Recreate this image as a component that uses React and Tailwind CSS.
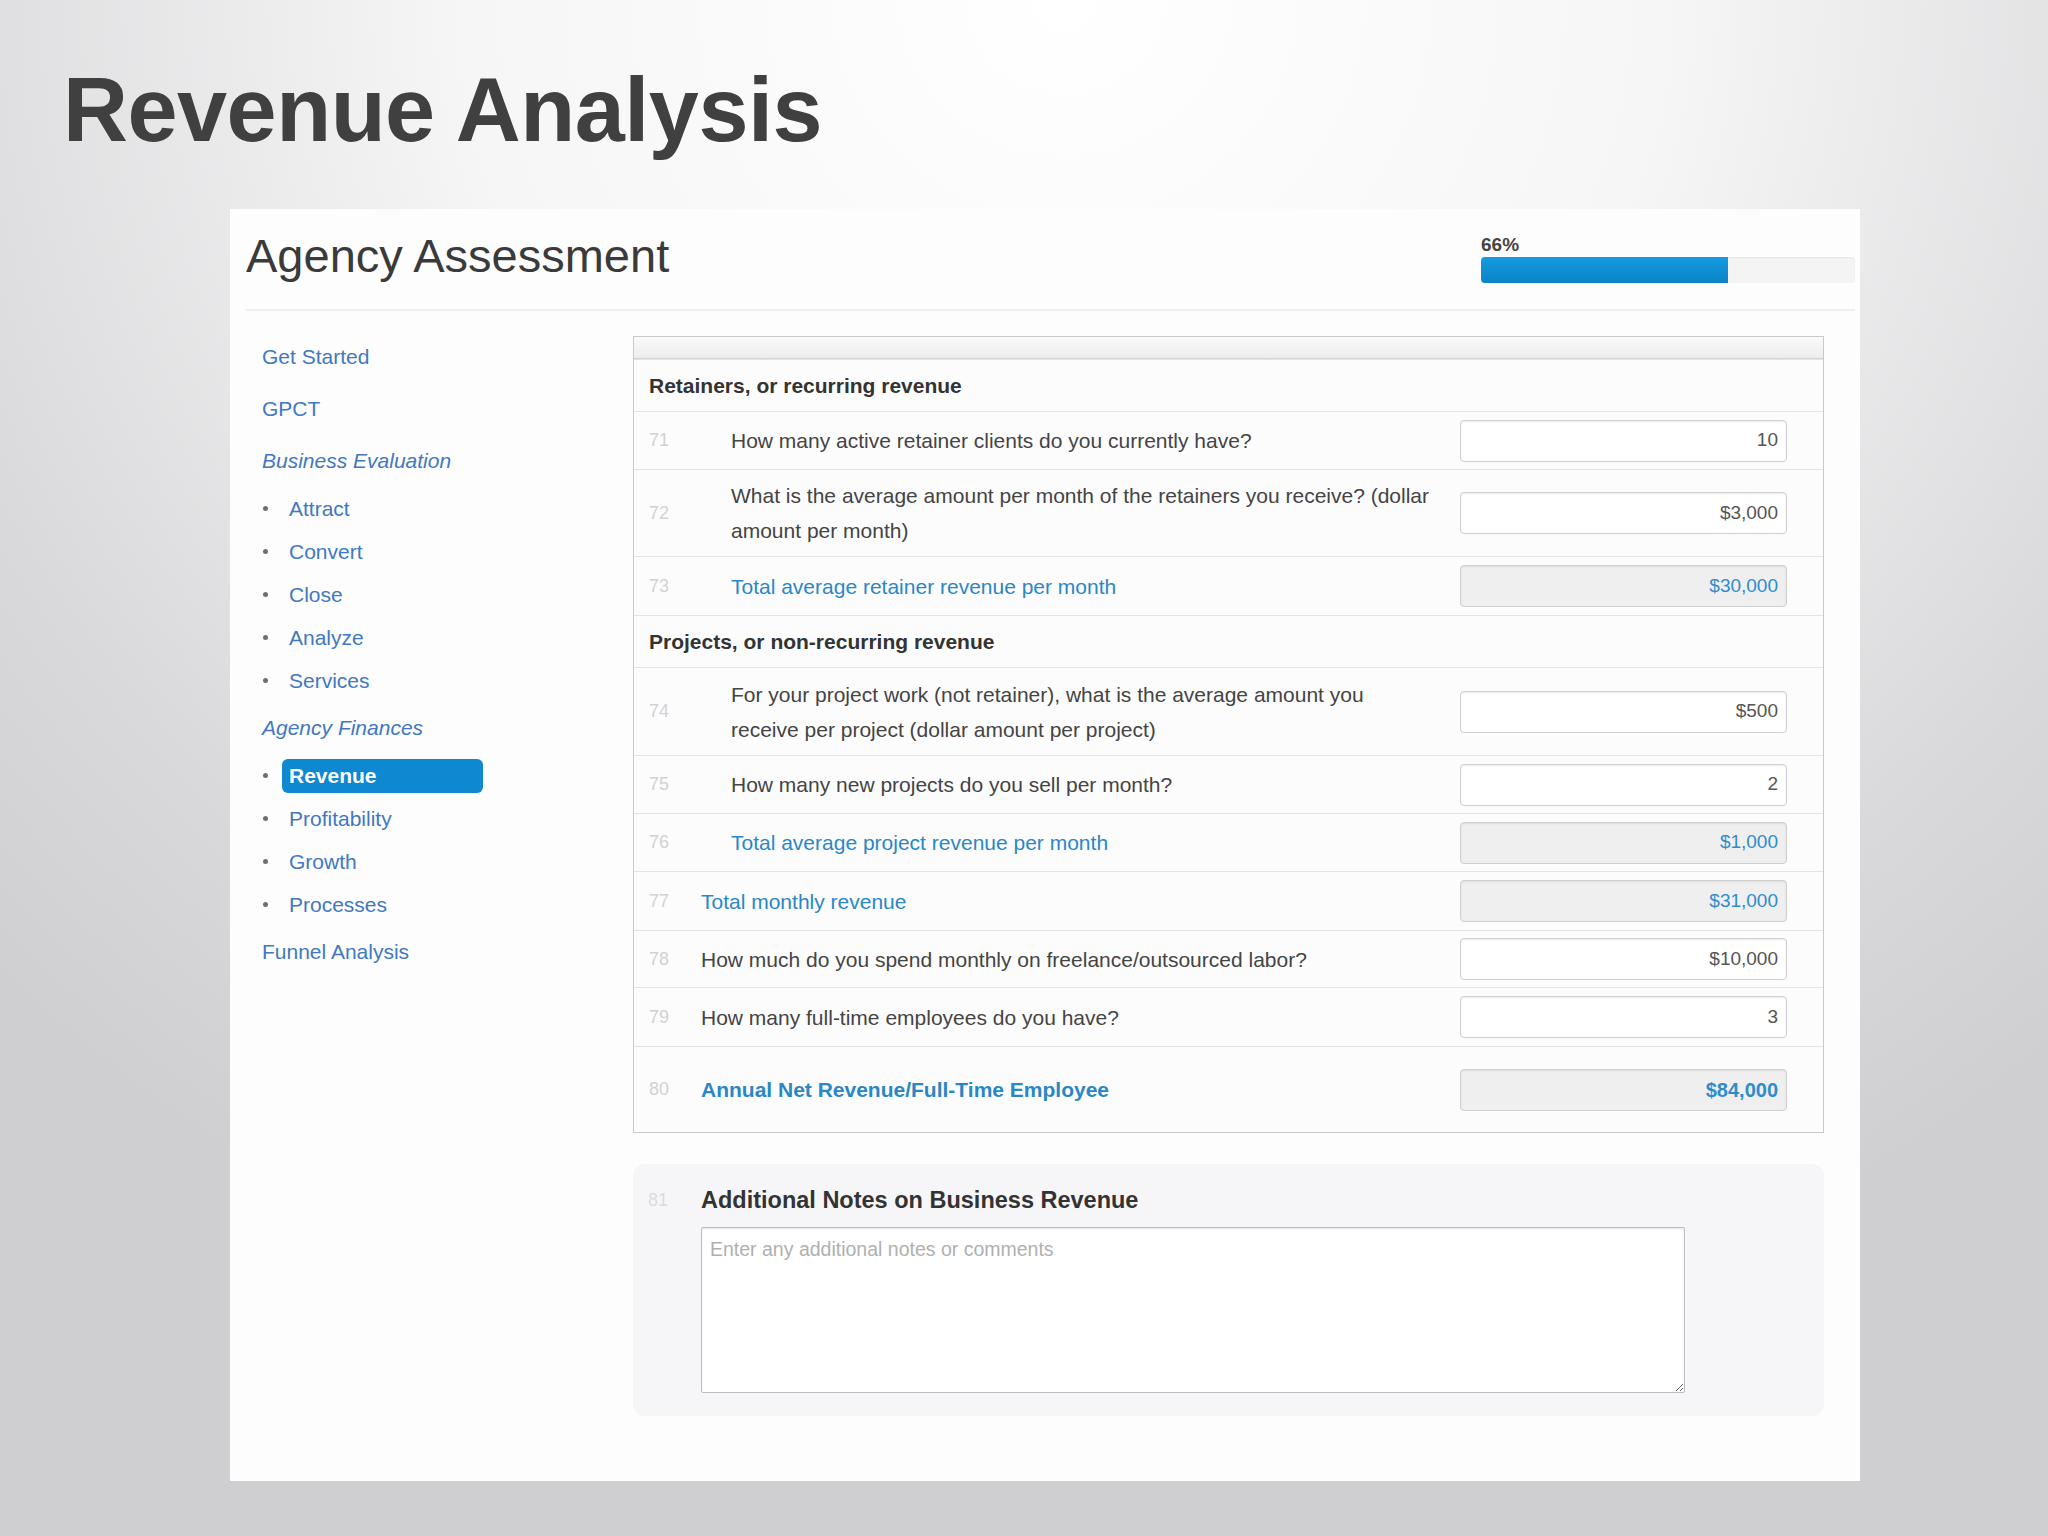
import React from "react";

const rows = [
  { type: "section", text: "Retainers, or recurring revenue", h: "h-[52px]" },
  { num: "71", lines: ["How many active retainer clients do you currently have?"], value: "10", indent: true, h: "h-[58px]" },
  { num: "72", lines: ["What is the average amount per month of the retainers you receive? (dollar", "amount per month)"], value: "$3,000", indent: true, h: "h-[87px]" },
  { num: "73", lines: ["Total average retainer revenue per month"], value: "$30,000", indent: true, computed: true, h: "h-[59px]" },
  { type: "section", text: "Projects, or non-recurring revenue", h: "h-[52px]" },
  { num: "74", lines: ["For your project work (not retainer), what is the average amount you", "receive per project (dollar amount per project)"], value: "$500", indent: true, h: "h-[88px]" },
  { num: "75", lines: ["How many new projects do you sell per month?"], value: "2", indent: true, h: "h-[58px]" },
  { num: "76", lines: ["Total average project revenue per month"], value: "$1,000", indent: true, computed: true, h: "h-[58px]" },
  { num: "77", lines: ["Total monthly revenue"], value: "$31,000", computed: true, h: "h-[59px]" },
  { num: "78", lines: ["How much do you spend monthly on freelance/outsourced labor?"], value: "$10,000", h: "h-[57px]" },
  { num: "79", lines: ["How many full-time employees do you have?"], value: "3", h: "h-[59px]" },
  { num: "80", lines: ["Annual Net Revenue/Full-Time Employee"], value: "$84,000", computed: true, bold: true, h: "h-[86px]" },
];

function Row({ r }) {
  if (r.type === "section") {
    return (
      <div className={`${r.h} flex items-center border-t border-[#e4e4e4] pl-[15px] text-[21px] font-bold text-[#333]`}>
        {r.text}
      </div>
    );
  }
  const textColor = r.computed ? "text-[#2a87c6]" : "text-[#444]";
  return (
    <div className={`${r.h} flex items-center border-t border-[#e4e4e4]`}>
      <div className={`${r.indent ? "w-[97px]" : "w-[67px]"} shrink-0 pl-[15px] text-[18px] text-[#d2d2d2]`}>{r.num}</div>
      <div className={`flex-1 text-[21px] leading-[35px] whitespace-nowrap ${textColor} ${r.bold ? "font-bold text-[#1f7bbd]" : ""}`}>
        {r.lines.map((l, i) => (
          <div key={i}>{l}</div>
        ))}
      </div>
      <div
        className={`w-[327px] h-[42px] mr-[36px] shrink-0 rounded-[4px] border border-[#cfcfcf] flex items-center justify-end pr-[8px] shadow-[inset_0_1px_2px_rgba(0,0,0,0.08)] ${
          r.computed ? "bg-[#efefef] text-[#2e8ccd]" : "bg-white text-[#555]"
        } ${r.bold ? "font-bold text-[#1f7bbd] text-[20px]" : "text-[19px]"}`}
      >
        {r.value}
      </div>
    </div>
  );
}

function TopItem({ children, italic }) {
  return (
    <div className={`h-[52px] flex items-center pl-[16px] text-[21px] text-[#4278c2] ${italic ? "italic" : ""}`}>{children}</div>
  );
}

function SubItem({ children, active }) {
  return (
    <div className="h-[43px] flex items-center pl-[17px]">
      <span className="w-[5px] h-[5px] rounded-full bg-[#6f6f6f]" />
      {active ? (
        <span className="ml-[14px] w-[201px] h-[34px] rounded-[6px] bg-[#0e88d0] flex items-center px-[7px] text-[21px] font-bold text-white">
          {children}
        </span>
      ) : (
        <span className="ml-[14px] px-[7px] text-[21px] text-[#4278c2]">{children}</span>
      )}
    </div>
  );
}

export default function App() {
  return (
    <div className="w-[2048px] h-[1536px] overflow-hidden bg-[radial-gradient(ellipse_1500px_1400px_at_52%_0%,#ffffff_0%,#f6f6f7_40%,#d9d8da_80%,#cfced0_100%)] font-['Liberation_Sans',Arial,sans-serif]">
      <h1 className="pt-[65px] pl-[63px] text-[90px] leading-[90px] font-bold text-[#404040] tracking-[-0.5px]">Revenue Analysis</h1>
      <div className="mt-[54px] ml-[230px] w-[1630px] h-[1272px] bg-[#fdfdfd]">
        <div className="ml-[16px] mr-[5px] h-[102px] border-b-2 border-[#efefef] flex justify-between">
          <div className="pt-[23px] text-[47px] leading-[47px] text-[#3a3a3a]">Agency Assessment</div>
          <div className="w-[374px] pt-[25px]">
            <div className="text-[19px] leading-[22px] font-bold text-[#444]">66%</div>
            <div className="mt-[1px] h-[26px] rounded-[4px] bg-[#f4f4f4] shadow-[inset_0_1px_2px_rgba(0,0,0,0.06)] overflow-hidden">
              <div className="h-full w-[66%] bg-[linear-gradient(#149bdf,#0a84c6)]" />
            </div>
          </div>
        </div>
        <div className="flex pl-[16px]">
          <div className="w-[387px] shrink-0 pt-[20px]">
            <TopItem>Get Started</TopItem>
            <TopItem>GPCT</TopItem>
            <TopItem italic>Business Evaluation</TopItem>
            <SubItem>Attract</SubItem>
            <SubItem>Convert</SubItem>
            <SubItem>Close</SubItem>
            <SubItem>Analyze</SubItem>
            <SubItem>Services</SubItem>
            <TopItem italic>Agency Finances</TopItem>
            <SubItem active>Revenue</SubItem>
            <SubItem>Profitability</SubItem>
            <SubItem>Growth</SubItem>
            <SubItem>Processes</SubItem>
            <TopItem>Funnel Analysis</TopItem>
          </div>
          <div className="w-[1191px] shrink-0 pt-[25px]">
            <div className="border border-[#c9c9c9] bg-[#fcfcfd]">
              <div className="h-[22px] bg-[linear-gradient(#fafafa,#ededed)] border-b border-[#d4d4d4]" />
              {rows.map((r, i) => (
                <Row key={i} r={r} />
              ))}
            </div>
            <div className="mt-[31px] h-[252px] rounded-[12px] bg-[#f6f6f8]">
              <div className="pt-[24px] flex items-center leading-[24px]">
                <div className="w-[68px] pl-[15px] text-[18px] text-[#dcdcdc]">81</div>
                <div className="text-[23.5px] font-bold text-[#333]">Additional Notes on Business Revenue</div>
              </div>
              <textarea
                readOnly
                placeholder="Enter any additional notes or comments"
                className="block mt-[15px] ml-[68px] w-[984px] h-[166px] rounded-[2px] border border-[#bdbdbd] bg-white px-[8px] py-[7px] text-[19.5px] text-[#555] placeholder:text-[#b0b0b0] shadow-[inset_0_1px_2px_rgba(0,0,0,0.1)] outline-none"
              />
            </div>
          </div>
        </div>
      </div>
    </div>
  );
}
